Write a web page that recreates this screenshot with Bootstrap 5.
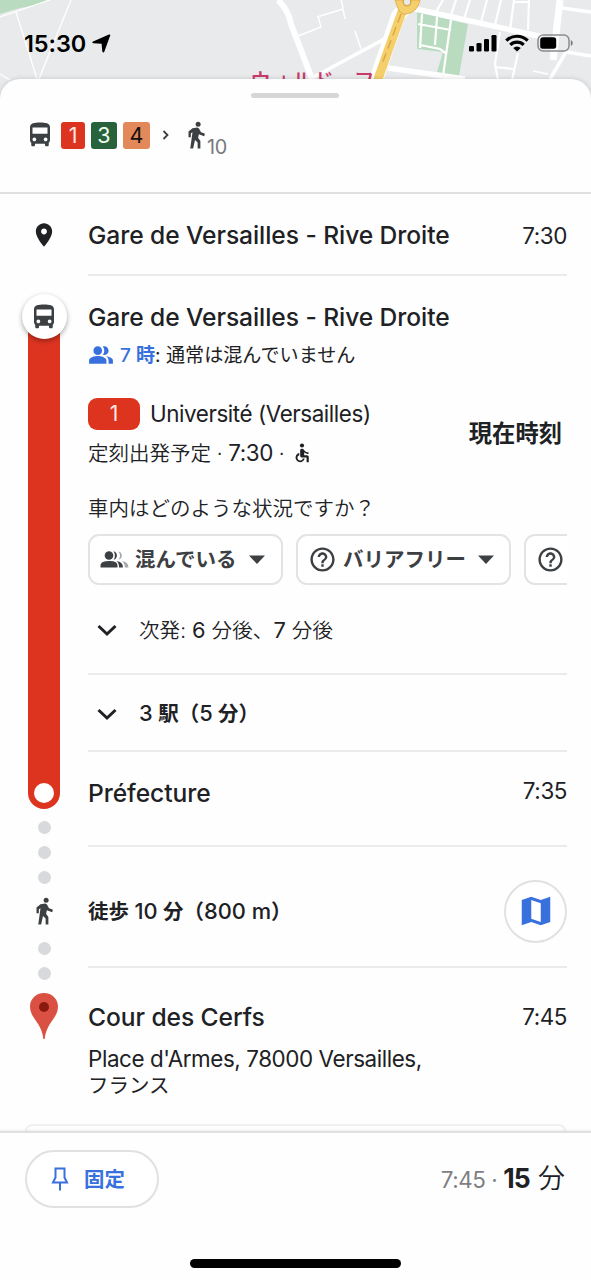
<!DOCTYPE html>
<html lang="ja">
<head>
<meta charset="utf-8">
<meta name="viewport" content="width=device-width, initial-scale=1">
<title>Gare de Versailles - Cour des Cerfs</title>
<link href="https://cdn.jsdelivr.net/npm/bootstrap@5.3.0/dist/css/bootstrap.min.css" rel="stylesheet">
<style>
  body { font-family: Inter, "Noto Sans CJK JP", sans-serif; color: #202124; background: #e8eaed; }
  svg { display: block; flex: none; }
  .screen { height: 1280px; }
  .map-area { height: 79px; }
  .map-art { top: 0; left: 0; }
  .map-label { left: 250px; top: 66px; font-size: 21px; line-height: 30px; color: #c93a6a; font-weight: 500; white-space: nowrap; }
  .status { height: 79px; padding: 7px 18px 0 24px; color: #000; }
  .clock { font-size: 23.5px; font-weight: 600; line-height: 28px; letter-spacing: -.1px; padding-top: 1px; }
  .sheet { background: #fefefe; border-radius: 20px 20px 0 0; box-shadow: 0 0 5px rgba(0,0,0,.16); }
  .sheet-head { height: 115px; border-bottom: 2px solid #dfe0e1; }
  .handle { width: 88px; height: 5px; background: #d6d6d8; margin: 14px auto 0; position: relative; left: -1px; }
  .summary { height: 30px; margin-top: 22px; padding-left: 25px; }
  .line-tag { height: 27px; border-radius: 3px; font-size: 21.5px; line-height: 27px; text-align: center; }
  .red { background: #dd3420; color: #ffe9e4; }
  .green { background: #28623c; color: #effff2; }
  .orange { background: #e38859; color: #111; }
  .walk-min { font-size: 19.8px; line-height: 20px; color: #77797c; letter-spacing: -.4px; padding-top: 24px; }
  .rail { width: 88px; }
  .origin-ic { padding-top: 27px; height: 100px; }
  .mode-disc { width: 45px; height: 45px; box-shadow: 0 2px 5px rgba(0,0,0,.35); z-index: 1; }
  .bar { width: 32px; height: 493px; margin-top: -23px; border-radius: 0 0 16px 16px; padding-bottom: 6px; }
  .stop-dot { width: 20px; height: 20px; }
  .dot { width: 13px; height: 13px; background: #d8d9dd; margin-bottom: 12px; }
  .plan { padding-right: 24px; min-width: 0; }
  .rule { border-bottom: 2px solid #ebebec; }
  .place { font-size: 24.6px; font-weight: 500; line-height: 34px; letter-spacing: -.07px; white-space: nowrap; }
  .hour { font-size: 22.4px; line-height: 30px; letter-spacing: -.42px; }
  .crowd { height: 26px; margin-top: 8px; font-size: 19.1px; }
  .blue { color: #3871dd; }
  .pill-line { width: 52px; height: 32px; border-radius: 9px; font-size: 21px; line-height: 32px; text-align: center; }
  .thin { font-weight: 350; }
  .t20 { font-size: 20.5px; line-height: 30px; }
  .latin { font-size: 21.8px; }
  .chip { height: 51px; border: 2px solid #e2e3e5; border-radius: 11px; font-size: 20.5px; font-weight: 700; color: #3c4043; flex: none; background: #fff; }
  .chip span { padding-top: 2px; }
  .now { font-size: 23.3px; font-weight: 700; line-height: 32px; padding-top: 2px; }
  .md { font-weight: 500; }
  .map-btn { width: 63px; height: 63px; border: 2px solid #e0e1e3; }
  .peek { height: 7px; margin: 0 25px; border: 2px solid #f0f0f1; border-bottom: 0; border-radius: 12px 12px 0 0; }
  .foot { height: 149px; background: #fefefe; border-top: 2px solid #dfe0e1; box-shadow: 0 -1px 2px rgba(0,0,0,.07); }
  .pin-btn { width: 134px; height: 58px; border: 2px solid #e0e1e3; border-radius: 29px; font-size: 20.4px; font-weight: 700; }
  .home-bar { width: 211px; height: 9px; background: #000; }
</style>
</head>
<body>
<svg width="0" height="0" class="position-absolute" aria-hidden="true">
  <symbol id="bus" viewBox="0 0 24 24"><path d="M4 16c0 .88.39 1.67 1 2.22V20c0 .55.45 1 1 1h1c.55 0 1-.45 1-1v-1h8v1c0 .55.45 1 1 1h1c.55 0 1-.45 1-1v-1.78c.61-.55 1-1.34 1-2.22V6c0-3.5-3.58-4-8-4s-8 .5-8 4v10zm3.5 1c-.83 0-1.5-.67-1.5-1.5S6.67 14 7.5 14s1.5.67 1.5 1.5S8.33 17 7.5 17zm9 0c-.83 0-1.5-.67-1.5-1.5s.67-1.5 1.5-1.5 1.5.67 1.5 1.5-.67 1.5-1.5 1.5zm1.5-6H6V6h12v5z"/></symbol>
  <symbol id="walk" viewBox="0 0 24 24"><circle cx="13.700" cy="3.300" r="2"/><path d="M9.200 6.500L13 6Q14 6.100 14.500 7L16 9.700L19.200 11L18.500 12.900L14.300 11.300L13.700 14.200L15.500 16.800V22.800H13.300V18L11.200 16L9.700 22.800H7.400L9.200 9.800L7.900 10.500V13.700H6V9.200z"/></symbol>
  <symbol id="help" viewBox="0 0 24 24"><path d="M11 18h2v-2h-2v2zm1-16C6.48 2 2 6.48 2 12s4.48 10 10 10 10-4.48 10-10S17.52 2 12 2zm0 18c-4.41 0-8-3.59-8-8s3.59-8 8-8 8 3.59 8 8-3.59 8-8 8zm0-14c-2.21 0-4 1.79-4 4h2c0-1.1.9-2 2-2s2 .9 2 2c0 2-3 1.75-3 5h2c0-2.25 3-2.5 3-5 0-2.21-1.79-4-4-4z"/></symbol>
  <symbol id="chev" viewBox="0 0 20 14"><path d="M1.500 3l8.500 8 8.500-8" fill="none" stroke="#202124" stroke-width="3"/></symbol>
</svg>

<div class="screen d-flex flex-column position-relative overflow-hidden">
  <!-- map strip behind the status bar -->
  <svg class="map-art position-absolute" width="591" height="110" viewBox="0 0 591 110">
    <rect width="591" height="110" fill="#e8eaec"/>
    <path d="M0 0H47L38 5 20 8 0 14z" fill="#b9dcc1"/>
    <g fill="none" stroke="#fff" stroke-width="1.3">
      <path d="M0 17L50 0M16 12L37 79M71 0L39 79M0 74l10 6"/>
    </g>
    <path d="M417 12l51 12-9 52-22-4 6-20-26-3z" fill="#b9dcc1"/>
    <g fill="none" stroke="#fff">
      <path d="M278 0Q289 11 291 24L312 79" stroke-width="6"/>
      <path d="M411 8l132 29M388 68l77 11" stroke-width="5.500"/>
      <path d="M560 0l-7 60" stroke-width="7"/>
      <path d="M312 78l78-42M550 79l16-27 25 4M562 8l29 4" stroke-width="3.500"/>
      <path d="M443 0l-7 12M456 0l-5 15M470 0l-6 19M487 0l-6 22M501 0l-6 25M514 0l-4 30M529 0l-1 30M514 2h15M500 32l-5 32 3 16M518 53l-6 27M495 67l18 2M422 14l-2 34M437 17l-2 28M451 20l-8 56M418 24l33 6M420 45l20 4 7 5" stroke-width="2.200"/>
      <path d="M298 36l23-9-3-11M317 17l26-8 2 10M343 8l-2-9M355 31l6 18M533 71l15 3" stroke-width="1.500"/>
    </g>
    <path d="M412 0l-14 16-22 64" fill="none" stroke="#fff" stroke-width="14"/>
    <path d="M404 6l-10 28-17 48" fill="none" stroke="#f6cf6d" stroke-width="9"/>
    <path d="M395 0h25c-2 9-7 13-14 14s-8-6-11-14z" fill="#f6cf6d" stroke="#e2b04e" stroke-width="1"/>
    <path d="M401 14l-19 50" stroke="#d7a846" stroke-width="1.400" stroke-dasharray="9 5"/>
    <circle cx="407" cy="2" r="3.800" fill="#e8eaed" stroke="#d8aa4c" stroke-width="1.500"/>
  </svg>
  <div class="map-label position-absolute">ウォルドーフ</div>

  <div class="map-area flex-shrink-0 position-relative">
    <div class="status d-flex align-items-center">
      <span class="clock">15:30</span>
      <svg style="margin-left:6px" width="19" height="19" viewBox="0 0 19 19"><path d="M18.300 1.300L12.300 17.800Q11.300 19.300 10.300 17.500L9.600 9.700 1.200 9.200Q-.6 8.500 1 7.500L17 .6Q18.600 .2 18.300 1.300z"/></svg>
      <svg class="ms-auto" width="28" height="18" viewBox="0 0 28 18"><rect x="0" y="12" width="5" height="5.500" rx="1.300"/><rect x="7.500" y="9" width="5" height="8.500" rx="1.300"/><rect x="15" y="5" width="5" height="12.500" rx="1.300"/><rect x="22.500" y="1" width="5" height="16.500" rx="1.300"/></svg>
      <svg class="ms-2" width="24" height="18" viewBox="0 0 24 18"><g fill="none" stroke="#000" stroke-width="3.200"><path d="M1.300 6.600a15.300 15.300 0 0 1 21.400 0M5.300 10.800a9.600 9.600 0 0 1 13.400 0"/></g><path d="M12 17.500l-3.800-3.600a5.500 5.500 0 0 1 7.600 0z"/></svg>
      <svg class="ms-2" width="36" height="18" viewBox="0 0 36 18"><rect x="1" y="1" width="31" height="16" rx="5" fill="none" stroke="#8b8c8f" stroke-width="1.500"/><rect x="3.200" y="3.200" width="16" height="11.600" rx="2.500"/><path d="M33.800 6q2 .8 2 3t-2 3z" fill="#77797c"/></svg>
    </div>
  </div>

  <main class="sheet flex-grow-1 d-flex flex-column position-relative">
    <header class="sheet-head flex-shrink-0 overflow-hidden">
      <div class="handle rounded-pill"></div>
      <div class="summary d-flex align-items-center">
        <svg width="30" height="30" fill="#3c4043"><use href="#bus"/></svg>
        <span class="line-tag red" style="width:24px;margin-left:6px">1</span>
        <span class="line-tag green" style="width:26px;margin-left:6px">3</span>
        <span class="line-tag orange" style="width:27px;margin-left:6px">4</span>
        <svg style="margin-left:12px" width="8" height="10" viewBox="0 0 8 10"><path d="M1.500 1l4 4-4 4" fill="none" stroke="#3c4043" stroke-width="1.800"/></svg>
        <svg style="margin-left:11px" width="30" height="30" fill="#3c4043"><use href="#walk"/></svg>
        <span class="walk-min" style="margin-left:-4px">10</span>
      </div>
    </header>

    <div class="d-flex flex-shrink-0 overflow-hidden" style="height:930px">
      <!-- timeline -->
      <div class="rail flex-shrink-0 d-flex flex-column align-items-center">
        <div class="origin-ic flex-shrink-0"><svg width="28" height="28" viewBox="0 0 24 24" fill="#202124"><path d="M12 2C8.130 2 5 5.130 5 9c0 5.250 7 13 7 13s7-7.750 7-13c0-3.870-3.130-7-7-7zm0 9.500c-1.380 0-2.500-1.120-2.500-2.500s1.120-2.500 2.500-2.500 2.500 1.120 2.500 2.500-1.120 2.500-2.500 2.500z"/></svg></div>
        <div class="mode-disc bg-white rounded-circle flex-shrink-0 d-flex align-items-center justify-content-center position-relative"><svg width="30" height="30" fill="#3c4043"><use href="#bus"/></svg></div>
        <div class="bar red flex-shrink-0 d-flex align-items-end justify-content-center"><div class="stop-dot bg-white rounded-circle"></div></div>
        <div class="d-flex flex-column align-items-center flex-shrink-0" style="padding-top:12px">
          <i class="dot rounded-circle"></i><i class="dot rounded-circle"></i><i class="dot rounded-circle"></i>
          <svg width="30" height="30" fill="#3c4043"><use href="#walk"/></svg>
          <i class="dot rounded-circle" style="margin-top:16px"></i><i class="dot rounded-circle"></i>
        </div>
        <svg width="30" height="48" viewBox="0 0 30 48"><path d="M15 1C7 1 1 7 1 14.500c0 9 7 14 10.500 22C13 40 14 43 14.300 47h1.400C16 43 17 40 18.500 36.500 22 28.500 29 23.500 29 14.500 29 7 23 1 15 1z" fill="#da5143"/><circle cx="15" cy="15" r="5" fill="#8a1a10"/></svg>
      </div>

      <!-- itinerary -->
      <div class="plan flex-grow-1 d-flex flex-column">
        <div class="rule d-flex align-items-center justify-content-between flex-shrink-0" style="height:82px;padding-top:1px"><span class="place">Gare de Versailles - Rive Droite</span><span class="hour" style="padding-top:2px">7:30</span></div>
        <div class="place" style="margin-top:24px">Gare de Versailles - Rive Droite</div>
        <div class="crowd d-flex align-items-center flex-shrink-0">
          <svg width="26" height="26" viewBox="0 0 24 24" fill="#3871dd"><path d="M16.670 13.130C18.040 14.060 19 15.320 19 17v3h4v-3c0-2.180-3.570-3.470-6.330-3.870zM15 12c2.210 0 4-1.790 4-4s-1.790-4-4-4c-.47 0-.91.1-1.330.24C14.500 5.270 15 6.580 15 8s-.5 2.730-1.330 3.760c.42.14.86.24 1.330.24zM9 12c2.210 0 4-1.790 4-4s-1.790-4-4-4-4 1.790-4 4 1.790 4 4 4zm0 1c-2.670 0-8 1.340-8 4v3h16v-3c0-2.660-5.330-4-8-4z"/></svg>
          <span class="text-nowrap" style="margin-left:6px"><span class="blue md">7 <b>時</b></span>: 通常は混んでいません</span>
        </div>
        <div class="d-flex align-items-center justify-content-between flex-shrink-0" style="margin-top:30px;height:70px">
          <div>
            <div class="d-flex align-items-center"><span class="pill-line red">1</span><span class="hour" style="margin-left:10px;padding-top:1px">Université (Versailles)</span></div>
            <div class="d-flex align-items-center thin t20" style="margin-top:8px"><span>定刻出発予定 · <span class="hour fw-normal">7:30</span> ·</span>
              <svg style="margin-left:6px" width="22" height="22" viewBox="0 0 24 24" fill="#202124"><circle cx="12" cy="3.800" r="2.300"/><path d="M19 13.300v-2c-1.540.02-3.090-.75-4.070-1.830l-1.290-1.430c-.17-.19-.38-.34-.61-.45H13c-.35-.2-.75-.3-1.190-.26C10.760 7.110 10 8.040 10 9.090V15c0 1.100.9 2 2 2h5v5h2.400v-5.500c0-1.100-.9-2-2-2h-3v-3.450c1.290 1.070 3.250 1.940 5 1.950zm-6.170 5c-.41 1.160-1.520 2-2.830 2-1.660 0-3-1.340-3-3 0-1.310.84-2.410 2-2.830V12.100c-2.280.46-4 2.480-4 4.900 0 2.760 2.240 5 5 5 2.420 0 4.440-1.720 4.900-4h-2.070z"/></svg></div>
          </div>
          <div class="now" style="margin-right:5px">現在時刻</div>
        </div>
        <div class="thin t20" style="margin-top:26px">車内はどのような状況ですか？</div>
        <div class="d-flex overflow-hidden flex-shrink-0" style="margin-top:10px;gap:13px">
          <div class="chip d-flex align-items-center" style="width:195px;padding-left:10px">
            <svg width="29" height="17" viewBox="0 0 29 17"><g fill="#a6a8ab"><path d="M18.500 .5a4.200 4.200 0 0 1 0 8.200q3-4 0-8.200zM22 10q6.500 1 6.500 6.500h-3.700q.2-4-2.800-6.500z"/></g><g fill="#3c4043"><circle cx="9" cy="4.500" r="4.300"/><path d="M13.500 .3a4.300 4.300 0 0 1 0 8.400q3-4.200 0-8.400zM.5 16.500v-2.600Q1 10.300 9 10t8.500 3.900v2.600zM16.500 10q6.500.8 6.500 6.500h-4q.3-4-2.500-6.500z"/></g></svg>
            <span style="margin-left:6px">混んでいる</span>
            <svg style="margin-left:13px" width="16" height="9" viewBox="0 0 16 9"><path d="M0 .5h16L8 9z" fill="#3c4043"/></svg>
          </div>
          <div class="chip d-flex align-items-center" style="width:215px;padding-left:10px">
            <svg width="29" height="29" fill="#3c4043"><use href="#help"/></svg>
            <span style="margin-left:6px">バリアフリー</span>
            <svg style="margin-left:12px" width="16" height="9" viewBox="0 0 16 9"><path d="M0 .5h16L8 9z" fill="#3c4043"/></svg>
          </div>
          <div class="chip d-flex align-items-center" style="width:195px;padding-left:10px"><svg width="29" height="29" fill="#3c4043"><use href="#help"/></svg></div>
        </div>
        <div class="rule d-flex align-items-center t20 flex-shrink-0 thin" style="height:90px;padding:2px 0 0 9px">
          <svg width="20" height="14"><use href="#chev"/></svg><span style="margin-left:22px;letter-spacing:.12px">次発: <span class="fw-normal latin">6</span> 分後、<span class="fw-normal latin">7</span> 分後</span>
        </div>
        <div class="rule d-flex align-items-center t20 flex-shrink-0 md" style="height:77px;padding:2px 0 0 9px">
          <svg width="20" height="14"><use href="#chev"/></svg><span style="margin-left:22px"><span class="latin">3</span> <b>駅（</b><span class="latin">5</span> <b>分）</b></span>
        </div>
        <div class="rule d-flex justify-content-between flex-shrink-0" style="height:95px;padding-top:24px"><span class="place">Préfecture</span><span class="hour">7:35</span></div>
        <div class="rule d-flex align-items-center justify-content-between t20 md flex-shrink-0" style="height:121px;padding-top:9px">
          <span style="padding-top:1px"><b>徒歩</b> <span class="latin">10</span> <b>分（</b><span class="latin">800 m</span><b>）</b></span>
          <span class="map-btn rounded-circle bg-white d-flex align-items-center justify-content-center"><svg width="38" height="38" viewBox="0 0 24 24" fill="#3871dd" fill-rule="evenodd"><path d="M3 5l6-2 6 2.100L21 3v16l-6 2-6-2.100L3 21zM9 5v11.900L15 19V7.100z"/></svg></span>
        </div>
        <div class="d-flex align-items-center justify-content-between flex-shrink-0" style="margin-top:32px;height:34px"><span class="place">Cour des Cerfs</span><span class="hour">7:45</span></div>
        <div class="hour flex-shrink-0" style="margin-top:12px;line-height:26px">Place d'Armes, 78000 Versailles,<br><span class="t20" style="line-height:26px;letter-spacing:0">フランス</span></div>
      </div>
    </div>
    <div class="peek flex-shrink-0"></div>

    <footer class="foot flex-shrink-0 d-flex flex-column position-relative">
      <div class="d-flex align-items-center justify-content-between" style="padding:17px 25px 0">
        <div class="pin-btn blue d-flex align-items-center bg-white" style="padding-left:24px">
          <svg width="18" height="24" viewBox="0 0 18 24" fill="none" stroke="#3871dd" stroke-width="2"><path d="M3.500 1.500h11M4.500 1.500v9L2 15.500h14L13.500 10.500V1.500M9 15.500V23.500"/></svg>
          <span style="margin-left:15px;padding-top:2px">固定</span>
        </div>
        <div class="d-flex align-items-baseline"><span class="hour" style="color:#7d7f82">7:45&nbsp;·&nbsp;</span><span class="fw-bold" style="font-size:26.500px;letter-spacing:-.8px">15</span><span class="thin" style="font-size:27px;line-height:36px;margin:0 1px 0 8px">分</span></div>
      </div>
      <div class="home-bar rounded-pill mx-auto" style="margin-top:51px"></div>
    </footer>
  </main>
</div>
<script src="https://cdn.jsdelivr.net/npm/bootstrap@5.3.0/dist/js/bootstrap.bundle.min.js"></script>
</body>
</html>
